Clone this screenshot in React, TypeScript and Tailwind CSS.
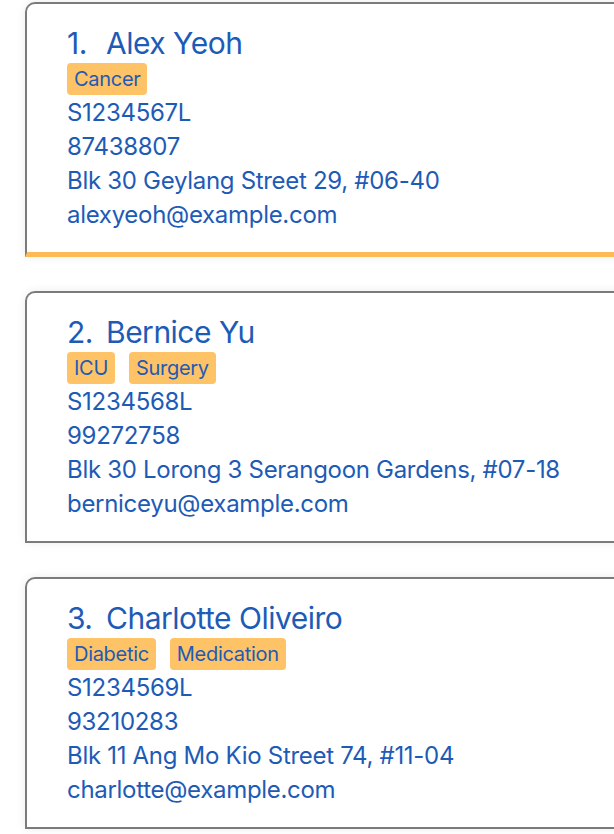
import React from "react";

type Person = {
  idx: number;
  name: string;
  tags: string[];
  nric: string;
  phone: string;
  address: string;
  email: string;
  selected?: boolean;
};

const people: Person[] = [
  { idx: 1, name: "Alex Yeoh", tags: ["Cancer"], nric: "S1234567L", phone: "87438807", address: "Blk 30 Geylang Street 29, #06-40", email: "alexyeoh@example.com", selected: true },
  { idx: 2, name: "Bernice Yu", tags: ["ICU", "Surgery"], nric: "S1234568L", phone: "99272758", address: "Blk 30 Lorong 3 Serangoon Gardens, #07-18", email: "berniceyu@example.com" },
  { idx: 3, name: "Charlotte Oliveiro", tags: ["Diabetic", "Medication"], nric: "S1234569L", phone: "93210283", address: "Blk 11 Ang Mo Kio Street 74, #11-04", email: "charlotte@example.com" },
];

function Card({ p }: { p: Person }) {
  return (
    <div
      className={
        "w-[610px] bg-white rounded-tl-[10px] border-l-2 border-t-2 border-[#7b7b7b] shadow-[0_0_10px_rgba(0,0,0,0.08)] pl-[40px] pt-[21px] " +
        (p.selected ? "h-[255px] border-b-[5px] border-b-[#fdbb57]" : "h-[252px] border-b-2")
      }
    >
      <div className="flex text-[30px] leading-[36px] tracking-[-0.5px] text-[#1d5bb6] whitespace-pre">
        <span className="w-[39px]">{p.idx}.</span>
        <span>{p.name}</span>
      </div>
      <div className="flex gap-[14px] mt-[2px]">
        {p.tags.map((t) => (
          <span key={t} className="bg-[#fec267] rounded-[4px] px-[7px] text-[20px] leading-[32px] tracking-[-0.3px] text-[#1d5bb6]">{t}</span>
        ))}
      </div>
      <div className="text-[24px] leading-[34px] tracking-[-0.3px] text-[#1d5bb6] mt-[1px]">
        <div>{p.nric}</div>
        <div>{p.phone}</div>
        <div>{p.address}</div>
        <div>{p.email}</div>
      </div>
    </div>
  );
}

export default function App() {
  return (
    <div className="w-[614px] h-[834px] overflow-hidden bg-white pl-[25px] pt-[2px] font-['Inter',sans-serif]">
      <div className="flex flex-col gap-[34px]">
        {people.map((p) => (
          <Card key={p.idx} p={p} />
        ))}
      </div>
    </div>
  );
}
